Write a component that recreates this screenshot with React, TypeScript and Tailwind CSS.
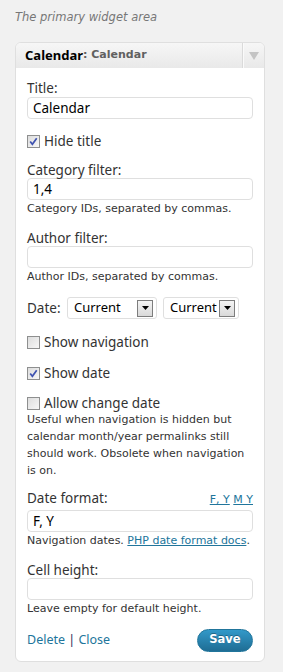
import React from "react";

const help = "font-['DejaVu_Sans',sans-serif] text-[11px] leading-[17px] text-[#333]";
const label = "text-[13.5px] leading-[16px] text-[#333]";
const link = "text-[#21759b] underline";

function Checkbox({ checked }: { checked?: boolean }) {
  return (
    <svg width="13" height="13" viewBox="0 0 13 13" className="shrink-0">
      <defs>
        <linearGradient id="cbg" x1="0" y1="0" x2="1" y2="1">
          <stop offset="0" stopColor="#dcdcdc" />
          <stop offset="1" stopColor="#f8f8f8" />
        </linearGradient>
      </defs>
      <rect x="0.5" y="0.5" width="12" height="12" fill="url(#cbg)" stroke="#8e8f8f" />
      {checked && (
        <path d="M3.2 6.4 L5.4 9.3 L9.7 3.2" fill="none" stroke="#3f53b0" strokeWidth="1.7" />
      )}
    </svg>
  );
}

function CheckRow({ text, checked, className }: { text: string; checked?: boolean; className: string }) {
  return (
    <div className={`flex items-center h-[16px] ${className}`}>
      <Checkbox checked={checked} />
      <span className={`ml-[4px] ${label}`}>{text}</span>
    </div>
  );
}

function Field({ value, className = "" }: { value?: string; className?: string }) {
  return (
    <input
      readOnly
      defaultValue={value}
      className={`block w-full h-[22px] border border-[#dfdfdf] rounded-[4px] bg-white px-[5px] text-[13.5px] text-black outline-none ${className}`}
    />
  );
}

function Select({ width }: { width: string }) {
  return (
    <div className={`${width} h-[22px] border border-[#dfdfdf] rounded-[3px] bg-white flex items-center pl-[6px] pr-[3px]`}>
      <span className="text-[13px] text-black flex-1">Current</span>
      <div className="w-[16px] h-[17px] border border-[#7d7d7d] bg-gradient-to-b from-[#f4f4f4] to-[#d9d9d9] flex items-center justify-center">
        <svg width="7" height="4" viewBox="0 0 7 4">
          <path d="M0 0 H7 L3.5 4 Z" fill="#000" />
        </svg>
      </div>
    </div>
  );
}

export default function App() {
  return (
    <div className="min-h-[672px] bg-[#f1f1f1] pt-[9px] px-[15px] font-['Noto_Sans',sans-serif]">
      <p className="font-['DejaVu_Sans',sans-serif] italic text-[11.5px] leading-[17px] text-[#777]">
        The primary widget area
      </p>

      <div className="mt-[16px] w-[250px] border border-[#dfdfdf] rounded-[6px] bg-white overflow-hidden">
        <div className="h-[25px] flex bg-gradient-to-b from-[#f6f6f6] to-[#e9e9e9]">
          <div className="flex-1 flex items-center pl-[9px]">
            <span className="text-[13px] font-bold text-black">Calendar</span>
            <span className="font-['DejaVu_Sans',sans-serif] text-[11px] font-bold text-[#606060]">: Calendar</span>
          </div>
          <div className="w-[22px] border-l border-[#dadada] shadow-[inset_1px_0_0_#fafafa] flex items-center justify-center">
            <svg width="10" height="8" viewBox="0 0 10 8">
              <path d="M0 0 H10 L5 8 Z" fill="#c4c4c4" />
            </svg>
          </div>
        </div>

        <div className="px-[11px] pt-[12px] pb-[9px]">
          <div className={label}>Title:</div>
          <Field value="Calendar" className="mt-[1px]" />

          <CheckRow text="Hide title" checked className="mt-[14px]" />

          <div className={`${label} mt-[13px]`}>Category filter:</div>
          <Field value="1,4" />
          <div className={help}>Category IDs, separated by commas.</div>

          <div className={`${label} mt-[13px]`}>Author filter:</div>
          <Field />
          <div className={help}>Author IDs, separated by commas.</div>

          <div className="mt-[12px] flex items-center">
            <span className={`${label} w-[40px]`}>Date:</span>
            <Select width="w-[90px]" />
            <div className="w-[6px]" />
            <Select width="w-[76px]" />
          </div>

          <CheckRow text="Show navigation" className="mt-[15px]" />
          <CheckRow text="Show date" checked className="mt-[15px]" />
          <CheckRow text="Allow change date" className="mt-[14px]" />
          <div className={help}>
            Useful when navigation is hidden but
            <br />
            calendar month/year permalinks still
            <br />
            should work. Obsolete when navigation
            <br />
            is on.
          </div>

          <div className="mt-[11px] flex items-baseline justify-between">
            <span className={label}>Date format:</span>
            <span className="font-['DejaVu_Sans',sans-serif] text-[11px]">
              <a className={link}>F, Y</a> <a className={link}>M Y</a>
            </span>
          </div>
          <Field value="F, Y" className="mt-[1px]" />
          <div className={help}>
            Navigation dates. <a className={link}>PHP date format docs</a>.
          </div>

          <div className={`${label} mt-[13px]`}>Cell height:</div>
          <Field />
          <div className={help}>Leave empty for default height.</div>

          <div className="mt-[12px] flex items-center justify-between">
            <div className="text-[12.5px] leading-[16px]">
              <a className="text-[#21759b]">Delete</a>
              <span className="text-[#2b2b55]"> | </span>
              <a className="text-[#21759b]">Close</a>
            </div>
            <button className="w-[56px] h-[23px] rounded-full border border-[#21759b] bg-gradient-to-b from-[#3299c9] to-[#1f6d94] text-white font-bold font-['DejaVu_Sans',sans-serif] text-[11.5px] [text-shadow:0_-1px_0_rgba(0,0,0,0.3)]">
              Save
            </button>
          </div>
        </div>
      </div>
    </div>
  );
}
